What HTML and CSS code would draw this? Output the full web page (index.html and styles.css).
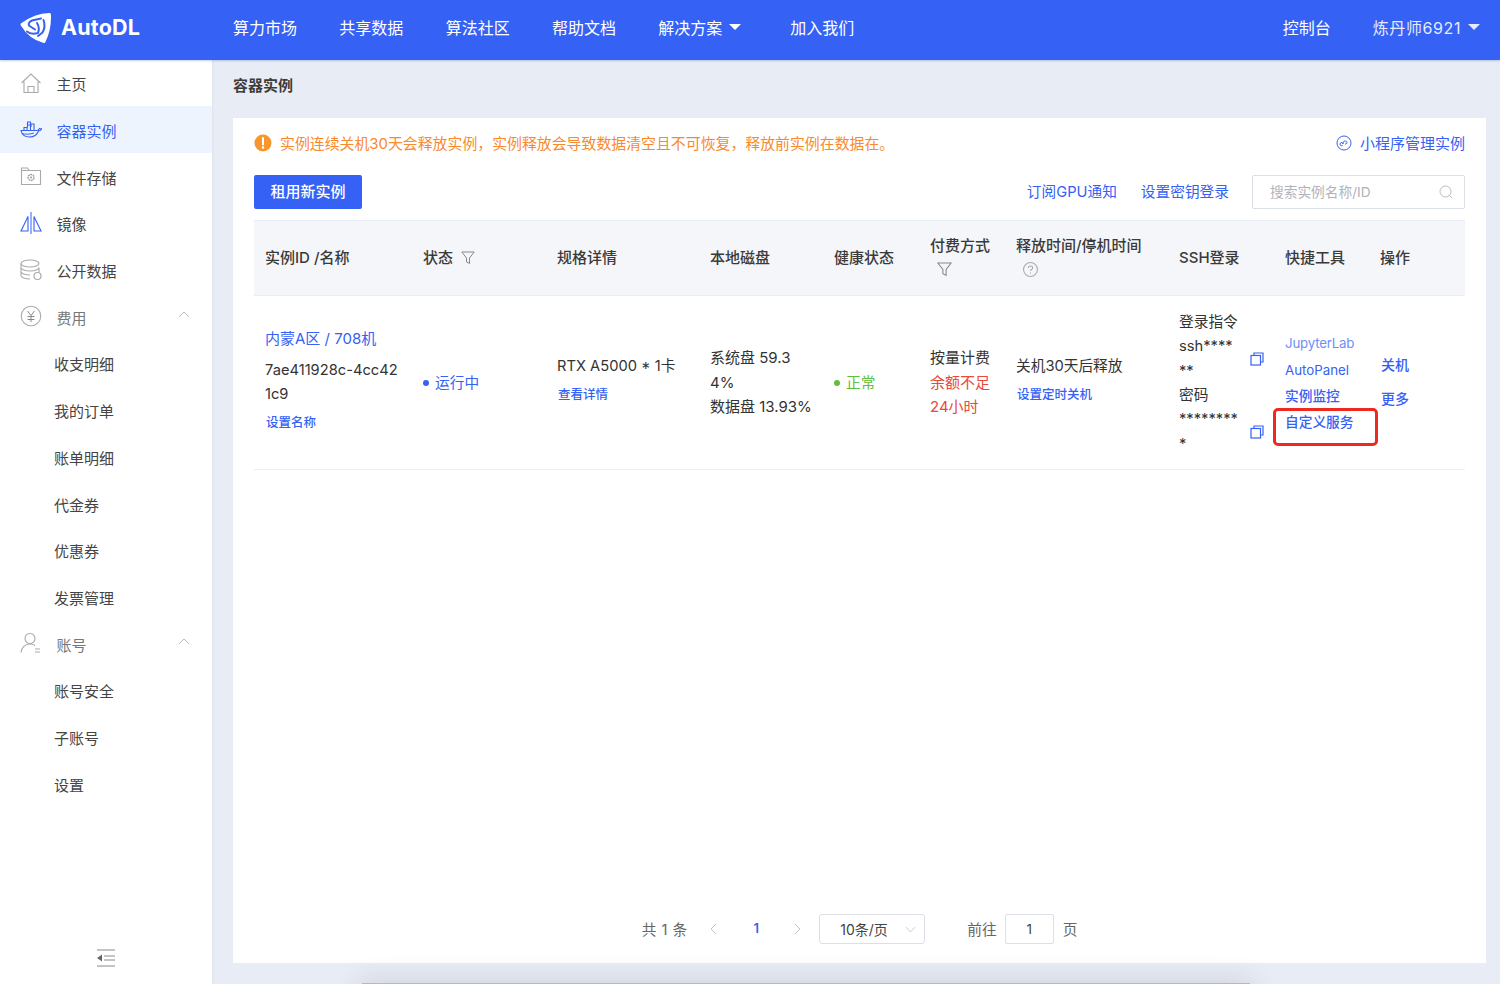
FILE: index.html
```html
<!DOCTYPE html>
<html lang="zh-CN">
<head>
<meta charset="utf-8">
<title>AutoDL 容器实例</title>
<link rel="stylesheet" href="styles.css">
</head>
<body>
<header class="topbar">
  <div class="brand">
    <svg class="brand-mark" viewBox="20 13 32 31" width="32" height="31"><path fill="#fff" stroke="#fff" stroke-width="3" stroke-linejoin="round" d="M22 24.500Q35 15 49.500 14.500 50 30 44 41.500 30 38 22 24.500Z"/><g fill="none" stroke="#3561f5" stroke-width="2" stroke-linecap="round" stroke-linejoin="round"><path d="M41 18.500 32 20.500Q27 23 29.500 26L35 29.500"/><path d="M43.500 20Q46 27 42.500 32.500L38 36"/><path d="M27 31.500Q31 35 38 33 40 28 37 23"/></g></svg>
    <span class="brand-name">AutoDL</span>
  </div>
  <nav class="topnav">
    <a>算力市场</a><a>共享数据</a><a>算法社区</a><a>帮助文档</a><a class="has-caret">解决方案<i class="caret"></i></a><a class="join">加入我们</a>
  </nav>
  <div class="topright">
    <a>控制台</a><a class="has-caret user">炼丹师6921<i class="caret"></i></a>
  </div>
</header>
<div class="layout">
  <aside class="sidebar">
    <ul class="menu">
      <li class="item"><svg class="ic" viewBox="0 0 22 22"><path d="M1.500 11 11 2l9.500 9M4 9.500V20.500h14V9.500M8 20.500v-6h6v6" fill="none" stroke="#aaa" stroke-width="1.100"/></svg>主页</li>
      <li class="item active"><svg class="ic" viewBox="0 0 22 22"><path d="M1 11.500h16c1 0 2-1 2.500-2 1 .5 1.800.5 2.300.2-.8 1.800-2.300 2.300-3.300 2.300-1.500 4-5 6-9 6-4.500 0-7.500-2-8.500-6.500ZM4 11V8.500h3V11M7.500 8.500V6h3v5M11 8V5h3v6M7.500 5.500V3h3v2.500" fill="none" stroke="#3561f5" stroke-width="1.100"/><path d="M2 14.500c3 1 8 1 12-.5" fill="none" stroke="#3561f5"/></svg>容器实例</li>
      <li class="item"><svg class="ic" viewBox="0 0 22 22"><path d="M1.500 19.500V3h6l1.500 2.500h11.500v14ZM1.500 5.500H9" fill="none" stroke="#aaa" stroke-width="1.100"/><circle cx="11" cy="12.500" r="3" fill="none" stroke="#999" stroke-width="1.300" stroke-dasharray="2 .6"/><circle cx="11" cy="12.500" r="1" fill="#999"/></svg>文件存储</li>
      <li class="item"><svg class="ic" viewBox="0 0 22 22"><path d="M11 0v22" stroke="#3561f5" fill="none" stroke-width="1"/><path d="M8 4.500V19H1ZM14 4.500V19H21Z" fill="none" stroke="#3561f5" stroke-width="1.100"/></svg>镜像</li>
      <li class="item"><svg class="ic" viewBox="0 0 22 22"><ellipse cx="10" cy="4.500" rx="9" ry="3.500" fill="none" stroke="#aaa" stroke-width="1.100"/><path d="M1 4.500v12c0 2 4 3.500 9 3.500M1 8.500c0 2 4 3.500 9 3.500s9-1.500 9-3.500V13M1 12.500c0 2 4 3.500 9 3.500" fill="none" stroke="#aaa" stroke-width="1.100"/><circle cx="17.500" cy="17" r="3.500" fill="#fff" stroke="#aaa" stroke-width="1.200"/></svg>公开数据</li>
      <li class="item group"><svg class="ic" viewBox="0 0 22 22"><circle cx="11" cy="11" r="9.800" fill="none" stroke="#aaa" stroke-width="1.100"/><path d="M7.500 6 11 10.500 14.500 6M7.500 11.500h7M7.500 14.500h7M11 10.500V17" fill="none" stroke="#888" stroke-width="1"/></svg>费用<svg class="chev" viewBox="0 0 12 7"><path d="M1 6 6 1l5 5" fill="none" stroke="#bbb"/></svg></li>
      <li class="item sub">收支明细</li>
      <li class="item sub">我的订单</li>
      <li class="item sub">账单明细</li>
      <li class="item sub">代金券</li>
      <li class="item sub">优惠券</li>
      <li class="item sub">发票管理</li>
      <li class="item group"><svg class="ic" viewBox="0 0 22 22"><circle cx="10" cy="6.500" r="5" fill="none" stroke="#aaa" stroke-width="1.100"/><path d="M1 20.500c.5-5 4-8.500 9-8.500 2 0 3.500.5 5 1.500M15 17h5M15 20h5" fill="none" stroke="#aaa" stroke-width="1.100"/></svg>账号<svg class="chev" viewBox="0 0 12 7"><path d="M1 6 6 1l5 5" fill="none" stroke="#bbb"/></svg></li>
      <li class="item sub">账号安全</li>
      <li class="item sub">子账号</li>
      <li class="item sub">设置</li>
    </ul>
    <div class="collapse"><svg viewBox="0 0 18 18" width="18" height="18"><path d="M0 1h18M7 7h11M7 11h11M0 17h18" stroke="#888" fill="none"/><path d="M0 9l5-3.500v7Z" fill="#666"/></svg></div>
  </aside>
  <main class="main">
    <h1 class="page-title">容器实例</h1>
    <section class="card">
      <div class="notice-row">
        <div class="notice"><svg viewBox="0 0 18 18" width="18" height="18"><circle cx="9" cy="9" r="8.500" fill="#f7962c"/><path d="M9 4v6.500" stroke="#fff" stroke-width="2" stroke-linecap="round"/><circle cx="9" cy="13.500" r="1.200" fill="#fff"/></svg>实例连续关机30天会释放实例，实例释放会导致数据清空且不可恢复，释放前实例在数据在。</div>
        <a class="mini"><svg viewBox="0 0 16 16" width="16" height="16"><circle cx="8" cy="8" r="7" fill="none" stroke="#3561f5"/><path d="M6.500 10.500c-2 1-3-1-2.200-2.300C5 7 7 7.500 7 9V8c0-1.500 2-2.700 3.600-1.500 1 1 0 3-1.600 2.500" fill="none" stroke="#3561f5"/></svg>小程序管理实例</a>
      </div>
      <div class="tool-row">
        <button class="primary">租用新实例</button>
        <div class="tool-links">
          <a>订阅GPU通知</a><a>设置密钥登录</a>
          <div class="search"><span>搜索实例名称/ID</span><svg viewBox="0 0 14 14" width="14" height="14"><circle cx="6.500" cy="6.500" r="5.500" fill="none" stroke="#bbb"/><path d="M10.500 10.500 13 13" stroke="#bbb"/></svg></div>
        </div>
      </div>
      <table class="grid">
        <colgroup><col class="c1"><col class="c2"><col class="c3"><col class="c4"><col class="c5"><col class="c6"><col class="c7"><col class="c8"><col class="c9"><col class="c10"></colgroup>
        <thead>
          <tr>
            <th>实例ID /名称</th>
            <th>状态<svg class="filter inline" viewBox="0 0 14 14"><path d="M.8 1h12.400L8.500 7v5.500l-3-1.500V7Z" fill="none" stroke="#888"/></svg></th>
            <th>规格详情</th>
            <th>本地磁盘</th>
            <th>健康状态</th>
            <th>付费方式<svg class="filter block" viewBox="0 0 14 14"><path d="M.8 1h12.400L8.500 7v5.500l-3-1.500V7Z" fill="none" stroke="#888"/></svg></th>
            <th>释放时间/停机时间<svg class="help" viewBox="0 0 14 14"><circle cx="7" cy="7" r="6.500" fill="none" stroke="#aaa"/><path d="M5 5.500C5 4.300 6 3.700 7 3.700c1.200 0 2 .8 2 1.800 0 1.500-2 1.500-2 3M7 9.700v1" fill="none" stroke="#aaa"/></svg></th>
            <th>SSH登录</th>
            <th>快捷工具</th>
            <th>操作</th>
          </tr>
        </thead>
        <tbody>
          <tr>
            <td class="col-name"><a class="region">内蒙A区 / 708机</a><p class="uuid">7ae411928c-4cc42<br>1c9</p><a class="small">设置名称</a></td>
            <td class="col-state"><span class="running"><i></i>运行中</span></td>
            <td class="col-spec"><p>RTX A5000 * 1卡</p><a class="small">查看详情</a></td>
            <td class="col-disk">系统盘 59.3<br>4%<br>数据盘 13.93%</td>
            <td class="col-state"><span class="healthy"><i></i>正常</span></td>
            <td class="col-pay">按量计费<br><span class="red">余额不足<br>24小时</span></td>
            <td class="col-spec"><p>关机30天后释放</p><a class="small">设置定时关机</a></td>
            <td class="col-ssh">
              <p>登录指令</p>
              <div class="ssh-line"><span>ssh****<br>**</span><svg class="copy" viewBox="0 0 14 14"><path d="M4 3.500V1h9v9h-2.500" fill="none" stroke="#3561f5" stroke-width="1.200"/><rect x="1" y="3.500" width="9.500" height="9.500" fill="none" stroke="#3561f5" stroke-width="1.200"/></svg></div>
              <p>密码</p>
              <div class="ssh-line"><span>********<br>*</span><svg class="copy" viewBox="0 0 14 14"><path d="M4 3.500V1h9v9h-2.500" fill="none" stroke="#3561f5" stroke-width="1.200"/><rect x="1" y="3.500" width="9.500" height="9.500" fill="none" stroke="#3561f5" stroke-width="1.200"/></svg></div>
            </td>
            <td class="col-tools"><a class="faint">JupyterLab</a><a class="latin">AutoPanel</a><a class="cn">实例监控</a><a class="cn marked">自定义服务</a></td>
            <td class="col-ops"><a>关机</a><a>更多</a></td>
          </tr>
        </tbody>
      </table>
      <div class="pager">
        <span class="total txt">共 1 条</span>
        <svg class="arrow" viewBox="0 0 8 12"><path d="M7 1 2 6l5 5" fill="none" stroke="#c0c4cc"/></svg>
        <span class="current txt">1</span>
        <svg class="arrow" viewBox="0 0 8 12"><path d="M1 1l5 5-5 5" fill="none" stroke="#c0c4cc"/></svg>
        <div class="size">10条/页<svg viewBox="0 0 12 7" width="11" height="7"><path d="M1 1l5 5 5-5" fill="none" stroke="#c0c4cc"/></svg></div>
        <span class="goto txt">前往</span>
        <div class="jump">1</div>
        <span class="unit txt">页</span>
      </div>
    </section>
    <div class="foot-gap"></div>
  </main>
</div>
<div class="window-shadow"></div>
</body>
</html>
```

FILE: styles.css
```css
* { box-sizing: border-box; }
html, body { margin: 0; height: 100%; }
body {
  width: 1500px; height: 984px; overflow: hidden; display: flex; flex-direction: column; position: relative;
  font-family: Inter, "Noto Sans CJK SC", sans-serif;
  font-size: 15px; color: #333; background: #e8ecf4;
}
a { color: #3561f5; text-decoration: none; }
p { margin: 0; }
ul { list-style: none; margin: 0; padding: 0; }

.topbar { height: 59.500px; flex: none; padding-bottom: 6px; background: #3561f5; color: #fff; display: flex; align-items: center; position: relative; z-index: 2; box-shadow: 0 1px 2px rgba(30,60,160,.25); }
.topbar a { color: #fff; font-size: 16px; }
.brand { width: 233px; padding-left: 20px; display: flex; align-items: center; gap: 9px; flex: none; }
.brand-mark { margin-top: 3px; }
.brand-name { font-family: Inter, sans-serif; font-weight: 700; font-size: 21.500px; letter-spacing: .2px; }
.topnav { display: flex; gap: 42.300px; align-items: center; }
.topnav .join { margin-left: 6.700px; }
.has-caret { display: inline-flex; align-items: center; }
.caret { width: 0; height: 0; margin-left: 7px; border: 6px solid transparent; border-top: 6px solid #fff; border-bottom: 0; }
.topright { margin-left: auto; padding-right: 20px; display: flex; gap: 42px; align-items: center; }
.topright .user { opacity: .88; letter-spacing: .6px; }

.layout { flex: 1; display: flex; min-height: 0; }
.sidebar { width: 212px; flex: none; background: #fff; display: flex; flex-direction: column; box-shadow: 1px 0 2px rgba(60,80,130,.06); }
.item { height: 46.730px; padding-top: 1.500px; display: flex; align-items: center; padding-left: 20px; gap: 14.400px; color: #444; font-size: 15px; }
.item.active { background: #eef4fd; color: #3561f5; }
.item.sub { padding-left: 54px; }
.item.group { color: #777; position: relative; }
.ic { width: 22px; height: 22px; flex: none; margin-top: -1.500px; }
.chev { width: 12px; height: 7px; position: absolute; left: 178px; top: 18px; }
.collapse { margin-top: auto; height: 35px; display: flex; justify-content: center; }

.main { flex: 1; min-width: 0; padding: 0 14px 0 21px; display: flex; flex-direction: column; }
.page-title { margin: 0; height: 58.500px; font-size: 15px; font-weight: 700; line-height: 52px; color: #3c3c3c; }
.card { flex: 1; background: #fff; padding: 0 21px; display: flex; flex-direction: column; }
.notice-row { height: 51px; padding-bottom: 2px; display: flex; align-items: center; justify-content: space-between; }
.notice { display: flex; align-items: center; gap: 8px; color: #f98a2c; font-size: 14.900px; }
.mini { display: flex; align-items: center; gap: 8px; font-size: 15px; }
.tool-row { height: 51px; display: flex; align-items: flex-start; justify-content: space-between; padding-top: 6px; }
.primary { width: 108px; height: 34px; background: #3561f5; border: 0; border-radius: 2px; color: #fff; font: 500 15px Inter, "Noto Sans CJK SC", sans-serif; padding: 0 0 3px; }
.tool-links { display: flex; align-items: center; gap: 24px; font-size: 14.700px; }
.tool-links a { padding-bottom: 4px; }
.search { width: 213px; height: 34px; margin-left: -1px; border: 1px solid #dcdfe6; border-radius: 2px; padding: 0 11px 0 17px; display: flex; align-items: center; justify-content: space-between; color: #b0b3bb; font-size: 13.700px; }
.search span { padding-bottom: 2px; }

.grid { width: 1211px; table-layout: fixed; border-collapse: collapse; }
.c1 { width: 158px; } .c2 { width: 134px; } .c3 { width: 153px; } .c4 { width: 124px; } .c5 { width: 96px; }
.c6 { width: 86px; } .c7 { width: 163px; } .c8 { width: 106px; } .c9 { width: 95px; } .c10 { width: 96px; }
.grid th { height: 75px; padding: 0 0 0 11px; background: #f4f6fa; text-align: left; font-weight: 500; font-size: 15px; color: #3a3a3a; border-top: 1px solid #e8ecf4; border-bottom: 1px solid #e8ecf4; line-height: 24px; }
.grid td { height: 174px; padding: 0 0 1px 11px; font-size: 14.700px; line-height: 24.300px; border-bottom: 1px solid #eceff5; color: #333; vertical-align: middle; }
.filter { width: 14px; height: 14px; }
.filter.inline { margin-left: 8px; vertical-align: -2px; }
.filter.block, .help { display: block; width: 15px; height: 15px; margin: 4px 0 5px 7px; }
.small { font-size: 12.500px; font-weight: 500; }
.region { display: block; font-size: 15px; margin-bottom: 7px; }
.uuid { margin-bottom: 5px; line-height: 24px; }
.grid td.col-name { padding-bottom: 3px; }
.col-name .small, .col-spec .small { display: block; padding-left: 1px; }
.grid td.col-state { padding-top: 1px; padding-bottom: 0; }
.grid td.col-spec { padding-bottom: 4px; }
.col-spec p { margin-bottom: 5px; }
.grid td.col-disk, .grid td.col-pay { padding-top: 2px; font-size: 15px; line-height: 24.500px; }
.running { color: #3561f5; }
.running i, .healthy i { display: inline-block; width: 6px; height: 6px; border-radius: 50%; margin-right: 6px; background: currentColor; vertical-align: 2px; }
.healthy { color: #5fbf3c; }
.red { color: #e8493a; }
.grid td.col-ssh { padding-top: 2px; }
.ssh-line { display: flex; justify-content: space-between; align-items: center; width: 85px; }
.copy { width: 14px; height: 14px; }
.grid td.col-tools { padding-top: 2px; }
.col-tools a { display: block; font-size: 13.700px; line-height: 26.300px; }
.col-tools a.faint { color: #6f8ff5; font-size: 13.300px; letter-spacing: -.2px; }
.col-tools a.latin { font-size: 13.300px; }
.col-tools a.cn { font-weight: 500; }
.marked { position: relative; }
.marked::after { content: ""; box-sizing: border-box; position: absolute; left: -12px; top: -1px; width: 105px; height: 38px; border: 3px solid #ee2a20; border-radius: 5px; }
.grid td.col-ops { padding-left: 12px; padding-bottom: 1px; }
.col-ops a { display: block; font-size: 14px; font-weight: 500; line-height: 34px; }

.pager { margin-top: auto; height: 68px; display: flex; align-items: center; justify-content: center; font-size: 14.700px; color: #666; }
.txt { padding-bottom: 2px; }
.total { word-spacing: 1px; }
.arrow { width: 8px; height: 12px; margin-left: 22px; }
.current { width: 34px; margin-left: 22px; text-align: center; color: #3561f5; font-weight: 600; font-size: 13px; }
.pager .current + .arrow { margin-left: 21px; }
.size { width: 106px; height: 30px; margin-left: 17px; border: 1px solid #dcdfe6; border-radius: 3px; display: flex; align-items: center; justify-content: space-between; padding: 0 8px 0 20px; color: #444; font-size: 14px; }
.goto { margin-left: 42px; }
.jump { width: 49px; height: 30px; margin-left: 8px; border: 1px solid #dcdfe6; border-radius: 2px; text-align: center; line-height: 28px; color: #444; font-size: 13.500px; }
.unit { margin-left: 9px; }
.foot-gap { height: 21px; flex: none; }
.window-shadow { position: absolute; left: 362px; width: 888px; top: 983px; height: 40px; background: #b6b9c1; box-shadow: 0 0 28px 2px rgba(40,50,80,.14); z-index: 3; }
```
